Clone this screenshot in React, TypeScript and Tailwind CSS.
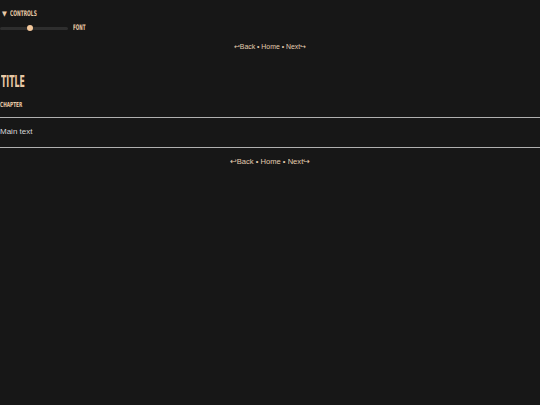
import React from "react";

const cond = { fontFamily: '"DejaVu Sans Condensed", "Liberation Sans", sans-serif' };

export default function App() {
  return (
    <div className="min-h-[405px] w-full bg-[#171717] text-[#e8c9a6]" style={{ fontFamily: '"Liberation Sans", Arial, sans-serif' }}>
      <div className="pt-[9px]">
        <div className="flex items-center gap-[3px] pl-[2px] text-[7px] font-bold leading-[10px]" style={cond}>
          <span className="text-[7px]">▼</span>
          <span className="inline-block origin-left scale-x-[0.7] scale-y-[1.1]">CONTROLS</span>
        </div>
        <div className="mt-[4px] flex items-center">
          <div className="relative h-[3px] w-[68px] rounded-full bg-[#2e2e2e]">
            <div className="absolute left-[27px] top-[-2px] h-[6px] w-[6px] rounded-full bg-[#f3c79b]" />
          </div>
          <span className="ml-[5px] inline-block origin-left scale-x-[0.65] scale-y-[1.1] text-[7px] font-bold leading-[10px]" style={cond}>FONT</span>
        </div>
        <div className="mt-[9px] text-center text-[6.9px] leading-[10px] text-[#e3cdb0]">
          ↩Back • Home • Next↪
        </div>
      </div>
      <div className="mt-[22px]">
        <div className="pl-[1px] text-[15px] font-bold leading-[16px]" style={cond}>
          <span className="inline-block origin-left scale-x-[0.58]">TITLE</span>
        </div>
        <div className="mt-[10px] text-[7px] font-bold leading-[10px]" style={cond}>
          <span className="inline-block origin-left scale-x-[0.68]">CHAPTER</span>
        </div>
        <div className="mt-[7px] h-px border-t border-[#b0b0b0]" />
        <div className="py-[8px] text-[8px] leading-[12px] text-[#d6d6d6]">Main text</div>
        <div className="mt-px h-px border-t border-[#b0b0b0]" />
        <div className="mt-[8px] text-center text-[7.6px] leading-[11px] text-[#e3cdb0]">↩Back • Home • Next↪</div>
      </div>
    </div>
  );
}
